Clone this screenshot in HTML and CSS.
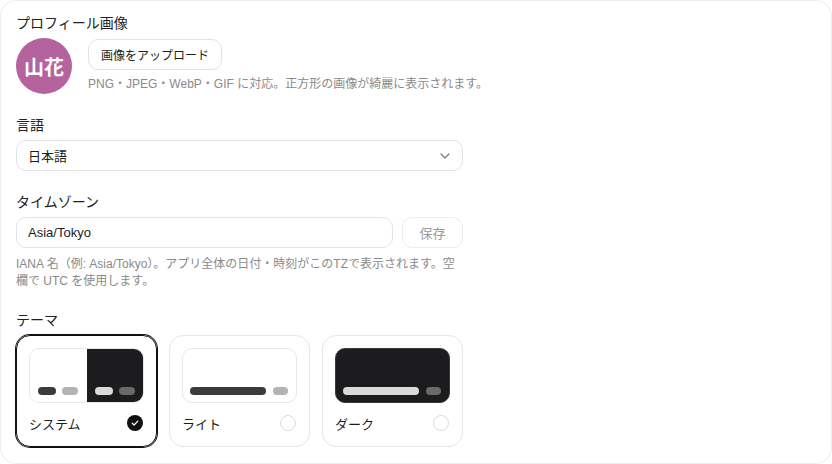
FILE: index.html
```html
<!DOCTYPE html>
<html lang="ja">
<head>
<meta charset="utf-8">
<title>設定</title>
<link rel="stylesheet" href="styles.css">
</head>
<body>
<div class="card">
  <div class="content">
    <section class="field">
      <div class="label">プロフィール画像</div>
      <div class="avatar-row">
        <div class="avatar">山花</div>
        <div class="avatar-side">
          <button class="btn">画像をアップロード</button>
          <p class="help nowrap">PNG・JPEG・WebP・GIF に対応。正方形の画像が綺麗に表示されます。</p>
        </div>
      </div>
    </section>

    <section class="field">
      <div class="label">言語</div>
      <div class="select">
        <span>日本語</span>
        <svg class="chev" width="10" height="6" viewBox="0 0 10 6"><path d="M1 1l4 4 4-4" fill="none" stroke="#7a7a7a" stroke-width="1.2" stroke-linecap="round" stroke-linejoin="round"/></svg>
      </div>
    </section>

    <section class="field">
      <div class="label">タイムゾーン</div>
      <div class="tz-row">
        <div class="input">Asia/Tokyo</div>
        <button class="btn save">保存</button>
      </div>
      <p class="help tz-help">IANA 名（例: Asia/Tokyo）。アプリ全体の日付・時刻がこのTZで表示されます。空欄で UTC を使用します。</p>
    </section>

    <section class="field">
      <div class="label">テーマ</div>
      <div class="themes">
        <div class="theme selected">
          <div class="preview split">
            <div class="half light-half">
              <span class="bar b-dark w18"></span><span class="bar b-gray w16"></span>
            </div>
            <div class="half dark-half">
              <span class="bar b-light w18"></span><span class="bar b-mid w16"></span>
            </div>
          </div>
          <div class="theme-foot">
            <span>システム</span>
            <svg width="16" height="16" viewBox="0 0 16 16"><circle cx="8" cy="8" r="8" fill="#111"/><path d="M5.2 8.2l1.9 1.8 3.7-3.9" fill="none" stroke="#fff" stroke-width="1.2" stroke-linecap="round" stroke-linejoin="round"/></svg>
          </div>
        </div>
        <div class="theme">
          <div class="preview light">
            <span class="bar b-dark grow"></span><span class="bar b-gray w15"></span>
          </div>
          <div class="theme-foot">
            <span>ライト</span>
            <span class="radio"></span>
          </div>
        </div>
        <div class="theme">
          <div class="preview dark">
            <span class="bar b-light grow"></span><span class="bar b-mid w15"></span>
          </div>
          <div class="theme-foot">
            <span>ダーク</span>
            <span class="radio"></span>
          </div>
        </div>
      </div>
    </section>
  </div>
</div>
</body>
</html>
```

FILE: styles.css
```css
* { box-sizing: border-box; }
html, body { margin: 0; padding: 0; background: #fff; }
body {
  font-family: "Liberation Sans", "Noto Sans CJK JP", sans-serif;
  color: #1c1c1c;
  overflow: hidden;
}
.card {
  width: 832px;
  height: 464px;
  border: 1px solid #ededed;
  border-radius: 16px;
  padding: 12px 15px 0;
  background: #fff;
}
.content {
  width: 447px;
  display: flex;
  flex-direction: column;
  gap: 21px;
}
.label {
  font-size: 14px;
  line-height: 20px;
  margin-bottom: 5px;
  color: #222;
}
.avatar-row {
  display: flex;
  gap: 16px;
  align-items: flex-start;
}
.avatar {
  width: 56px;
  height: 56px;
  border-radius: 50%;
  background: #b5639f;
  color: #fff;
  font-weight: bold;
  font-size: 20px;
  display: flex;
  align-items: center;
  justify-content: center;
  flex: none;
}
.avatar-side {
  padding-top: 1px;
  display: flex;
  flex-direction: column;
  align-items: flex-start;
  gap: 6px;
}
.btn {
  font-family: inherit;
  font-size: 12px;
  color: #1c1c1c;
  background: #fff;
  border: 1px solid #e3e3e3;
  border-radius: 10px;
  height: 31px;
  padding: 0 12px;
  margin: 0;
}
.help {
  margin: 0;
  font-size: 12px;
  line-height: 16.5px;
  color: #8a8a8a;
}
.nowrap { white-space: nowrap; }
.select, .input {
  height: 31px;
  border: 1px solid #e3e3e3;
  border-radius: 10px;
  padding: 0 11px;
  font-size: 13px;
  display: flex;
  align-items: center;
  color: #1c1c1c;
}
.select { justify-content: space-between; padding-right: 12px; }
.tz-row {
  display: flex;
  gap: 9px;
}
.input { flex: 1; }
.save {
  width: 61px;
  padding: 0;
  font-size: 13px;
  color: #9a9a9a;
  border-color: #ececec;
}
.tz-help { margin-top: 8px; }
.themes {
  display: grid;
  grid-template-columns: repeat(3, 1fr);
  gap: 12px;
}
.theme {
  border: 1px solid #e6e6e6;
  border-radius: 14px;
  padding: 12px;
  height: 112px;
  display: flex;
  flex-direction: column;
  gap: 10px;
}
.theme.selected {
  border-color: #111;
  box-shadow: 0 0 0 1px #111;
}
.preview {
  height: 55px;
  border-radius: 10px;
  border: 1px solid #e6e6e6;
  display: flex;
  align-items: flex-end;
  gap: 7px;
  padding: 0 8px 7px 7px;
  overflow: hidden;
  flex: none;
}
.preview.split { padding: 0; gap: 0; }
.half {
  flex: 1;
  height: 100%;
  display: flex;
  align-items: flex-end;
  gap: 6px;
  padding: 0 0 7px 8px;
}
.light-half { background: #fff; }
.dark-half { background: #1c1c1e; padding-left: 8px; }
.preview.dark { background: #1c1c1e; border-color: #3a3a3a; }
.bar {
  display: block;
  height: 8px;
  border-radius: 4px;
}
.grow { flex: 1; }
.w18 { width: 18px; }
.w16 { width: 16px; }
.w15 { width: 15px; }
.b-dark { background: #3b3b3b; }
.b-gray { background: #b3b3b3; }
.b-light { background: #dadada; }
.b-mid { background: #6a6a6a; }
.theme-foot {
  display: flex;
  justify-content: space-between;
  align-items: center;
  height: 20px;
  font-size: 13px;
  padding-right: 1px;
}
.radio {
  width: 16px;
  height: 16px;
  border-radius: 50%;
  border: 1px solid #dcdcdc;
}
```
